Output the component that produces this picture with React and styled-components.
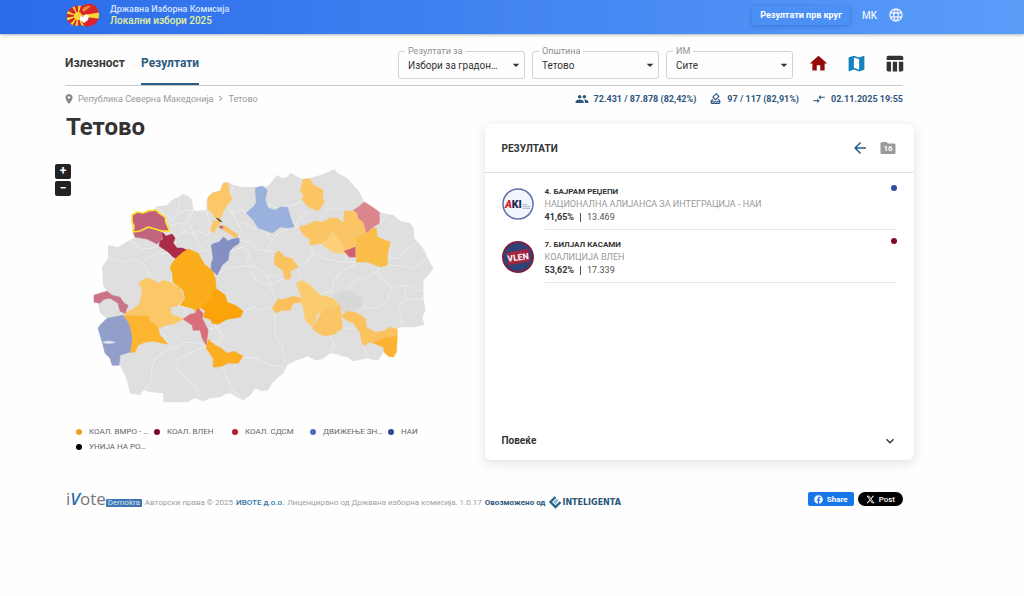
import React, { useState } from "react";
import styled, { createGlobalStyle } from "styled-components";
import {
  MdArrowBack,
  MdChevronRight,
  MdCompareArrows,
  MdExpandMore,
  MdFolder,
  MdGroup,
  MdHome,
  MdLanguage,
  MdLocationOn,
  MdMap,
  MdOutlineHowToVote,
  MdTableChart,
  MdArrowDropDown,
} from "react-icons/md";
import { FaFacebook } from "react-icons/fa";
import { FaXTwitter } from "react-icons/fa6";

const filters = [
  { id: "race", label: "Резултати за", options: ["Избори за градоначалник", "Избори за совет"] },
  { id: "municipality", label: "Општина", options: ["Тетово"] },
  { id: "station", label: "ИМ", options: ["Сите"] },
];

const legend = [
  { name: "КОАЛ. ВМРО - ДПМНЕ", color: "#eaa31c" },
  { name: "КОАЛ. ВЛЕН", color: "#7d0a24" },
  { name: "КОАЛ. СДСМ", color: "#b3202c" },
  { name: "ДВИЖЕЊЕ ЗНАМ", color: "#4a6fc0" },
  { name: "НАИ", color: "#2f4796" },
  { name: "УНИЈА НА РОМИ", color: "#000" },
];

const candidates = [
  {
    name: "4. БАЈРАМ РЕЏЕПИ",
    party: "НАЦИОНАЛНА АЛИЈАНСА ЗА ИНТЕГРАЦИЈА - НАИ",
    percent: "41,65%",
    votes: "13.469",
    color: "#2f4f9c",
    logo: "aki",
  },
  {
    name: "7. БИЛЈАЛ КАСАМИ",
    party: "КОАЛИЦИЈА ВЛЕН",
    percent: "53,62%",
    votes: "17.339",
    color: "#800a22",
    logo: "vlen",
  },
];

const country =
  "M132 230L132 215L137 212L143 213L148 210L155 209L157 206L162 206L167 205L172 200L178 197L183 194L188 196L192 200L193 210L198 211L206 210L207 200L212 193L222 190L223 183L227 182L233 185L243 187L255 187L262 186L267 187L272 181L277 175L282 178L287 177L290 173L296 176L302 179L310 178L320 175L330 171L334 169L337 173L347 178L352 184L358 190L364 202L372 207L379 212L386 214L393 215L400 221L410 223L413 228L414 238L418 243L422 247L425 253L427 258L433 268L428 275L423 280L423 298L425 310L422 317L424 325L413 327L402 327L397 328L396 352L393 357L388 355L383 352L378 360L373 360L367 358L353 361L347 357L342 356L337 354L330 353L322 359L315 360L307 356L300 359L294 361L287 365L283 373L277 378L272 383L268 390L261 391L255 388L250 395L243 400L237 397L230 393L225 394L220 397L210 398L203 401L195 398L187 402L163 402L163 393L152 392L143 390L140 395L130 393L127 380L120 365L112 365L110 358L105 353L103 345L98 328L100 325L107 318L100 313L98 303L94 302L94 295L107 291L103 285L102 267L108 258L108 245L118 247L130 240L135 237Z";

// Lines between municipalities without a colour of their own
const borders = [
  "M157 207L163 213L172 219L178 213L186 210L193 210",
  "M170 226L178 223L186 224L189 211",
  "M178 197L180 204L177 211",
  "M206 210L208 218L212 226L207 235L198 231L192 234L184 230L180 226",
  "M173 240L182 232L187 232",
  "M193 210L189 221L193 233L198 243L203 251L211 250",
  "M130 240L141 249L153 248L158 245",
  "M108 258L122 262L136 259L144 265L150 275L151 279",
  "M144 259L156 254L168 253L175 259",
  "M170 282L173 275L172 266",
  "M233 186L227 205L232 214L240 209L246 213",
  "M232 208L236 221L241 230L238 240",
  "M240 222L248 225L255 229",
  "M265 203L277 208L290 206L300 202",
  "M294 226L300 218L308 211",
  "M324 210L338 208L345 211",
  "M266 232L271 241L268 251L256 249L249 242L239 240",
  "M271 241L277 234L288 227L299 227",
  "M217 274L229 268L240 266L254 266L267 275L277 276",
  "M230 251L243 247L250 253L246 263",
  "M268 251L277 253M297 266L305 263L313 252L311 246",
  "M312 254L326 259L341 262L355 262",
  "M282 279L270 286L275 298M267 275L270 286L256 280L249 271",
  "M298 269L300 277L302 281M320 294L331 291L334 280L340 273L355 264",
  "M334 295L348 288L355 280L367 277L377 272L379 266",
  "M377 270L382 280L391 287L405 285L423 292",
  "M391 287L387 301L375 308L364 307L356 298",
  "M405 299L398 306L402 327M405 285L405 299L423 299",
  "M387 265L401 266L413 268L427 258",
  "M390 258L398 258L407 248L418 242",
  "M379 223L386 215M390 242L389 258",
  "M243 311L254 307L261 310L270 307L277 313",
  "M275 313L275 335L281 344L285 362",
  "M208 330L219 326M214 324L222 335L218 342L210 341",
  "M158 329L165 336L168 345L173 350L184 342L199 343L207 345",
  "M130 353L120 355M173 346L155 358L151 371L152 381L143 390",
  "M207 345L178 359L177 368L190 382L197 386L199 398",
  "M238 358L253 357L269 365L284 367",
  "M222 366L226 375L231 388L241 398",
  "M330 335L334 345L330 353M342 328L360 328M363 344L366 358",
  "M170 307L176 305L187 308L184 313M107 318L118 316M125 313L118 303",
];

const regions = [
  { fill: "#d8d8d8", d: "M333 295L347 289L362 298L362 307L343 312L338 304Z" },
  { fill: "#c0667d", d: "M133 232L140 231L148 228L155 229L161 232L163 237L160 241L157 244L147 239L135 237Z" },
  { fill: "#a92b47", d: "M162 232L166 236L172 234L175 238L173 243L177 248L182 248L187 250L182 254L177 259L173 257L168 252L159 246L160 241L163 239Z" },
  { fill: "#faac1a", d: "M172 263L177 257L183 252L188 249L198 253L204 264L212 270L215 278L216 288L213 298L206 304L200 307L197 312L192 308L180 305L185 298L183 290L173 282L172 272L170 268Z" },
  { fill: "#fba30a", d: "M217 289L225 295L227 302L235 305L243 311L240 317L227 319L218 324L212 323L210 319L203 317L205 311L200 307L213 298L213 291Z" },
  { fill: "#fbc767", d: "M123 313L133 309L140 303L142 288L138 283L144 279L150 278L158 283L162 280L170 282L180 288L184 298L177 306L170 307L172 315L180 317L183 319L173 324L165 325L158 329L154 323L150 322L148 316L125 314Z" },
  { fill: "#fcb431", d: "M124 315L148 316L150 322L154 323L158 328L160 335L168 344L153 341L145 342L138 345L135 352L130 352L132 338L130 328L128 322Z" },
  { fill: "#939fcb", d: "M107 318L123 315L128 322L130 328L132 338L130 352L120 355L119 365L112 365L110 358L105 353L103 345L98 328L100 325Z" },
  { fill: "#c97488", d: "M94 302L94 295L100 293L107 291L112 295L120 297L124 303L128 305L125 313L120 311L118 303L110 298L104 299L100 303Z" },
  { fill: "#d96f7a", d: "M183 319L190 314L195 313L198 308L203 313L202 318L208 330L206 345L202 338L200 330L193 330L192 325Z" },
  { fill: "#fbae22", d: "M208 339L215 345L221 348L227 353L234 351L243 356L238 363L227 363L222 366L213 367L213 358L206 348Z" },
  { fill: "#fbc767", d: "M207 200L208 197L212 193L220 191L223 183L228 183L229 192L232 199L227 205L223 212L220 219L215 218L212 213L208 210Z" },
  { fill: "#fbc767", d: "M213 221L221 220L219 225L216 228L214 233L210 231Z" },
  { fill: "#fbc160", d: "M221 226L225 226L238 235L236 238L222 229Z" },
  { fill: "#5a4640", d: "M216 218L219 219L222 222L219 221Z" },
  { fill: "#c96070", d: "M219 226L223 226L222 229L220 228Z" },
  { fill: "#848fc4", d: "M211 245L215 243L219 242L223 237L226 239L227 241L232 239L239 238L239 243L232 248L229 252L228 260L222 265L217 275L211 269L211 264L213 258Z" },
  { fill: "#9bb1dd", d: "M255 188L262 186L267 190L265 200L268 208L275 210L280 207L287 207L289 213L291 220L294 227L287 228L280 227L272 233L264 230L258 228L253 220L246 213L253 207L256 203Z" },
  { fill: "#fbc564", d: "M303 179L310 179L313 185L323 190L322 196L324 202L318 211L308 207L302 200L303 195L300 191Z" },
  { fill: "#fbc564", d: "M299 227L306 225L315 221L322 222L330 218L337 218L342 222L333 232L323 243L310 245L309 239L303 235Z" },
  { fill: "#fccf78", d: "M322 245L333 233L340 240L345 250L345 254L333 252Z" },
  { fill: "#fbc465", d: "M344 211L355 211L359 218L363 222L367 233L356 235L356 247L345 250L340 240L333 233L338 226L343 222Z" },
  { fill: "#dd858c", d: "M353 210L358 207L364 202L372 207L379 212L379 223L370 229L368 233L366 232L363 222L358 218L357 213Z" },
  { fill: "#fbbd49", d: "M356 236L367 233L372 228L376 228L377 237L390 242L387 255L387 265L380 267L367 262L356 262Z" },
  { fill: "#d5606d", d: "M344 251L350 249L355 247L355 257L349 257Z" },
  { fill: "#fbc260", d: "M275 253L279 251L285 257L291 258L298 267L290 271L291 277L289 279L285 279L282 270L274 264Z" },
  { fill: "#fbcb70", d: "M296 283L302 280L310 285L320 295L333 298L340 306L331 308L322 310L317 314L315 320L312 327L305 320L302 303L296 302L301 297Z" },
  { fill: "#fbc465", d: "M322 310L331 308L340 306L342 328L334 334L325 336L318 333L312 328L317 320Z" },
  { fill: "#fbc05b", d: "M272 308L275 303L278 299L284 299L293 296L300 298L300 302L293 303L290 310L282 310L276 313Z" },
  { fill: "#fbc260", d: "M341 315L347 311L355 312L365 318L366 327L375 332L383 331L389 327L397 329L397 336L382 338L373 343L368 342L364 346L361 341L360 333L353 323L346 320Z" },
  { fill: "#fcb333", d: "M373 343L382 338L397 336L396 352L393 357L388 356L384 352L383 347Z" },
];

const selectedRegion =
  "M133 232L134 226L132 222L132 215L137 212L143 213L148 211L156 210L159 213L165 217L166 223L168 227L169 231L162 231L155 229L148 227L140 231Z";

const ResultsMap = () => (
  <MapDrawing viewBox="71 164 413 246" role="img" aria-label="Мапа на општини">
    <path d={country} fill="#dfdfdf" />
    <path d={borders.join("")} fill="none" stroke="#ebebeb" strokeWidth="1" strokeLinejoin="round" />
    {regions.map((region) => (
      <path key={region.d} d={region.d} fill={region.fill} stroke={region.fill} strokeWidth="0.5" strokeLinejoin="round" />
    ))}
    <path d="M102 342Q108 339 116 342Q108 345 102 342Z" fill="#dbe3f2" />
    <path d={selectedRegion} fill="#c0607b" stroke="#fbe22d" strokeWidth="1.6" strokeLinejoin="round" />
  </MapDrawing>
);

const StateLogo = () => (
  <svg width="34" height="26" viewBox="0 0 34 26" aria-hidden="true">
    <defs>
      <clipPath id="emblem">
        <path d="M1 11C4 4 12 3 17 4C21 0 30 1 32 8C35 15 31 23 24 24C20 26 17 23 15 23C9 25 3 23 1 17Z" />
      </clipPath>
    </defs>
    <g clipPath="url(#emblem)">
      <rect width="34" height="26" fill="#d9242b" />
      <path
        d="M12 14L-2 7V11ZM12 14L-2 16V20ZM12 14L0 26H5ZM12 14L8 28H12ZM12 14L3 0H7ZM12 14L12 0H16ZM12 14L36 10V17ZM12 14L17 28H21Z"
        fill="#f8d633"
      />
      <path d="M16 8Q19 3 25 4Q22 7 18 10Z" fill="#e8893a" />
      <circle cx="12" cy="14" r="4" fill="#f8d633" />
      <path d="M14 14L17 15L20 12L23 14L22 18L18 21L14 18Z" fill="#fff" />
    </g>
  </svg>
);

const AkiLogo = () => (
  <svg width="32" height="32" viewBox="0 0 33 33" aria-hidden="true">
    <circle cx="16.5" cy="16.5" r="15.5" fill="#f3f5fa" stroke="#5b6fa9" strokeWidth="1.5" />
    <text x="3" y="21" fontFamily="Roboto, sans-serif" fontWeight="900" fontSize="11" fontStyle="italic" fill="#d2232f">
      A
    </text>
    <text x="10" y="21" fontFamily="Roboto, sans-serif" fontWeight="900" fontSize="11" fill="#222a55">
      KI
    </text>
    <path d="M21 17H26M21 19H29M21 21H29" stroke="#aeb6cc" strokeWidth="1" />
  </svg>
);

const VlenLogo = () => (
  <svg width="32" height="32" viewBox="0 0 33 33" aria-hidden="true">
    <circle cx="16.5" cy="16.5" r="15.5" fill="#2c4478" stroke="#7f1f3f" strokeWidth="2" />
    <path d="M5 12L27 8L29 21L7 25Z" fill="#a5263f" />
    <text
      x="16.5"
      y="20"
      textAnchor="middle"
      transform="rotate(-7 16.5 16.5)"
      fontFamily="Roboto, sans-serif"
      fontWeight="700"
      fontSize="9"
      fill="#fff"
    >
      VLEN
    </text>
  </svg>
);

const Filter = ({ id, label, options }) => (
  <Field>
    <FieldLabel htmlFor={id}>{label}</FieldLabel>
    <Select id={id}>
      {options.map((option) => (
        <option key={option}>{option}</option>
      ))}
    </Select>
    <Caret />
  </Field>
);

const Candidate = ({ candidate }) => (
  <CandidateRow>
    {candidate.logo === "aki" ? <AkiLogo /> : <VlenLogo />}
    <CandidateDetails>
      <div>
        <CandidateName>{candidate.name}</CandidateName>
        <Party>{candidate.party}</Party>
        <Votes>
          <strong>{candidate.percent}</strong>
          <Separator />
          {candidate.votes}
        </Votes>
      </div>
      <Dot color={candidate.color} />
    </CandidateDetails>
  </CandidateRow>
);

export default function App() {
  const [tab, setTab] = useState("results");

  return (
    <>
      <GlobalStyle />
      <Header>
        <Brand href="#">
          <StateLogo />
          <span>
            <BrandName>Државна Изборна Комисија</BrandName>
            <BrandEvent>Локални избори 2025</BrandEvent>
          </span>
        </Brand>
        <HeaderActions>
          <RoundButton type="button">Резултати прв круг</RoundButton>
          <Language type="button">
            MK
            <MdLanguage size={16} />
          </Language>
        </HeaderActions>
      </Header>

      <Toolbar>
        <Tabs>
          <Tab type="button" $active={tab === "turnout"} onClick={() => setTab("turnout")}>
            Излезност
          </Tab>
          <Tab type="button" $active={tab === "results"} onClick={() => setTab("results")}>
            Резултати
          </Tab>
        </Tabs>
        <Filters>
          {filters.map((filter) => (
            <Filter key={filter.id} {...filter} />
          ))}
        </Filters>
        <Views>
          <IconButton type="button" aria-label="Почетна" $color="#930a0a">
            <MdHome size={21} />
          </IconButton>
          <IconButton type="button" aria-label="Мапа" $color="#1682bd">
            <MdMap size={21} />
          </IconButton>
          <IconButton type="button" aria-label="Табела" $color="#333">
            <MdTableChart size={21} />
          </IconButton>
        </Views>
      </Toolbar>

      <InfoBar>
        <Breadcrumbs>
          <MdLocationOn size={12} color="#888" />
          <Crumb href="#">Република Северна Македонија</Crumb>
          <MdChevronRight size={11} />
          <span>Тетово</span>
        </Breadcrumbs>
        <Stats>
          <Stat>
            <MdGroup size={14} />
            72.431 / 87.878 (82,42%)
          </Stat>
          <Stat>
            <MdOutlineHowToVote size={13} />
            97 / 117 (82,91%)
          </Stat>
          <Stat>
            <MdCompareArrows size={14} />
            02.11.2025 19:55
          </Stat>
        </Stats>
      </InfoBar>

      <Content>
        <section>
          <Title>Тетово</Title>
          <MapRow>
            <ZoomControls>
              <ZoomButton type="button" aria-label="Зголеми">+</ZoomButton>
              <ZoomButton type="button" aria-label="Намали">−</ZoomButton>
            </ZoomControls>
            <ResultsMap />
          </MapRow>
          <Legend>
            {legend.map((item) => (
              <LegendItem key={item.name}>
                <Dot color={item.color} />
                <LegendName>{item.name}</LegendName>
              </LegendItem>
            ))}
          </Legend>
        </section>

        <Card>
          <CardHeader>
            <CardTitle>РЕЗУЛТАТИ</CardTitle>
            <CardActions>
              <IconButton type="button" aria-label="Назад" $color="#245f92">
                <MdArrowBack size={18} />
              </IconButton>
              <FolderButton type="button">
                <MdFolder size={18} />
                <FolderCount>16</FolderCount>
              </FolderButton>
            </CardActions>
          </CardHeader>
          <CandidateList>
            {candidates.map((candidate) => (
              <Candidate key={candidate.name} candidate={candidate} />
            ))}
          </CandidateList>
          <More type="button">
            Повеќе
            <MdExpandMore size={16} />
          </More>
        </Card>
      </Content>

      <Footer>
        <Credits>
          <IvoteLogo href="#">
            <IvoteName>
              i<em>V</em>ote
            </IvoteName>
            <IvoteTag>Demokra</IvoteTag>
          </IvoteLogo>
          <span>Авторски права © 2025</span>
          <FooterLink href="#">ИВОТЕ д.о.о.</FooterLink>
          <span>Лиценцирано од Државна изборна комисија. 1.0.17</span>
          <PoweredBy>Овозможено од</PoweredBy>
          <Inteligenta href="#">
            <svg width="14" height="14" viewBox="0 0 13 14" aria-hidden="true">
              <path d="M7 2L2 7L7 12L12 7" fill="none" stroke="#2b6487" strokeWidth="2.4" />
              <path d="M5 7L8 4L10 5L7 9Z" fill="#7fb4d2" />
            </svg>
            INTELIGENTA
          </Inteligenta>
        </Credits>
        <Share>
          <FacebookButton type="button">
            <FaFacebook size={9} />
            Share
          </FacebookButton>
          <PostButton type="button">
            <FaXTwitter size={9} />
            Post
          </PostButton>
        </Share>
      </Footer>
    </>
  );
}

const GlobalStyle = createGlobalStyle`
  * {
    box-sizing: border-box;
  }

  body {
    margin: 0;
    background: #fefefe;
    color: #333;
    font-family: Roboto, "Liberation Sans", sans-serif;
    font-size: 9px;
  }

  button,
  select {
    margin: 0;
    padding: 0;
    border: 0;
    background: none;
    color: inherit;
    font: inherit;
  }

  button {
    cursor: pointer;
  }

  a {
    color: inherit;
    text-decoration: none;
  }

  svg {
    flex-shrink: 0;
  }
`;

const Header = styled.header`
  display: flex;
  align-items: center;
  justify-content: space-between;
  height: 34px;
  padding: 0 120px 4px 66px;
  background: linear-gradient(90deg, #2b6bea, #5a9df9);
  box-shadow: 0 1px 3px rgba(0, 0, 0, 0.3);
  color: #fff;
`;

const Brand = styled.a`
  display: flex;
  align-items: center;
  gap: 10px;
`;

const BrandName = styled.span`
  display: block;
  color: #d5e3fc;
  font-size: 9px;
  font-weight: 500;
  line-height: 11px;
`;

const BrandEvent = styled.span`
  display: block;
  color: #e3f29b;
  font-size: 10px;
  font-weight: 500;
  line-height: 11px;
`;

const HeaderActions = styled.div`
  display: flex;
  align-items: center;
  gap: 12px;
`;

const RoundButton = styled.button`
  height: 19px;
  padding: 0 8px;
  border-radius: 3px;
  background: #4d90f5;
  box-shadow: 0 1px 4px rgba(20, 60, 140, 0.35);
  font-size: 9px;
  font-weight: 700;
`;

const Language = styled.button`
  display: flex;
  align-items: center;
  gap: 11px;
  color: #e6effd;
  font-size: 10px;
  font-weight: 500;
`;

const Toolbar = styled.nav`
  display: flex;
  align-items: stretch;
  height: 52px;
  margin: 0 121px 0 65px;
  border-bottom: 1px solid #c9c9c9;
`;

const Tabs = styled.div`
  display: flex;
  flex: 1;
  gap: 16px;
`;

const Tab = styled.button`
  padding-top: 8px;
  border-bottom: 2px solid ${(props) => (props.$active ? "#2d5b7f" : "transparent")};
  color: ${(props) => (props.$active ? "#2d5b7f" : "#3a3a3a")};
  font-size: 12px;
  font-weight: 700;
`;

const Filters = styled.div`
  display: flex;
  align-items: center;
  gap: 7px;
  padding-top: 10px;
`;

const Field = styled.div`
  position: relative;
  display: flex;
  align-items: center;
  width: 127px;
  height: 28px;
  border: 1px solid #d2d2d2;
  border-radius: 3px;
`;

const FieldLabel = styled.label`
  position: absolute;
  top: -6px;
  left: 6px;
  padding: 0 3px;
  background: #fefefe;
  color: #909090;
  font-size: 9px;
  line-height: 11px;
`;

const Select = styled.select`
  width: 100%;
  height: 100%;
  padding: 2px 21px 0 9px;
  appearance: none;
  overflow: hidden;
  font-size: 10px;
  text-overflow: ellipsis;
  white-space: nowrap;
`;

const Caret = styled(MdArrowDropDown)`
  position: absolute;
  right: 0;
  width: 16px;
  height: 16px;
  pointer-events: none;
`;

const Views = styled.div`
  display: flex;
  align-items: center;
  gap: 17px;
  padding: 8px 0 0 15px;
  margin-right: -2px;
`;

const IconButton = styled.button`
  display: flex;
  color: ${(props) => props.$color};
`;

const InfoBar = styled.div`
  display: flex;
  align-items: center;
  justify-content: space-between;
  height: 25px;
  margin: 0 121px 0 63px;
`;

const Breadcrumbs = styled.div`
  display: flex;
  align-items: center;
  gap: 2px;
  color: #9a9a9a;
  font-size: 9px;
`;

const Crumb = styled.a`
  margin-left: 1px;
`;

const Stats = styled.div`
  display: flex;
  gap: 13px;
  color: #2f567c;
  font-weight: 700;
`;

const Stat = styled.span`
  display: flex;
  align-items: center;
  gap: 5px;
`;

const Content = styled.main`
  display: grid;
  grid-template-columns: 1fr 1fr;
  align-items: start;
  padding: 0 110px 0 55px;
`;

const Title = styled.h1`
  margin: 2px 0 0 11px;
  color: #333;
  font-size: 24px;
  font-weight: 700;
  line-height: 28px;
`;

const MapRow = styled.div`
  display: flex;
  margin-top: 23px;
`;

const ZoomControls = styled.div`
  display: flex;
  flex-direction: column;
  gap: 2px;
  width: 16px;
`;

const ZoomButton = styled.button`
  height: 15px;
  border-radius: 2px;
  background: #222;
  color: #fff;
  font-size: 12px;
  font-weight: 700;
  line-height: 15px;
`;

const MapDrawing = styled.svg`
  flex: 1;
  min-width: 0;
`;

const Legend = styled.ul`
  display: grid;
  grid-template-columns: repeat(auto-fill, 78px);
  margin: 14px 0 0 21px;
  padding: 0;
  list-style: none;
`;

const LegendItem = styled.li`
  display: flex;
  align-items: center;
  gap: 7px;
  height: 15px;
  color: #666;
  font-size: 8px;
`;

const LegendName = styled.span`
  max-width: 62px;
  overflow: hidden;
  text-overflow: ellipsis;
  white-space: nowrap;
`;

const Dot = styled.i`
  flex-shrink: 0;
  width: 6px;
  height: 6px;
  border-radius: 50%;
  background: ${(props) => props.color};
`;

const Card = styled.section`
  display: flex;
  flex-direction: column;
  min-height: 336px;
  margin-top: 13px;
  border-radius: 6px;
  background: #fff;
  box-shadow: 0 3px 12px rgba(0, 0, 0, 0.12);
`;

const CardHeader = styled.header`
  display: flex;
  align-items: center;
  justify-content: space-between;
  height: 49px;
  padding: 0 17px;
  border-bottom: 1px solid #e2e2e2;
`;

const CardTitle = styled.h2`
  margin: 0;
  font-size: 10px;
  font-weight: 700;
`;

const CardActions = styled.div`
  display: flex;
  align-items: center;
  gap: 10px;
`;

const FolderButton = styled.button`
  position: relative;
  display: flex;
  color: #999;
`;

const FolderCount = styled.span`
  position: absolute;
  inset: 1px 0 0;
  color: #fff;
  font-size: 8px;
  font-weight: 700;
  line-height: 18px;
`;

const CandidateList = styled.div`
  flex: 1;
  padding: 4px 17px 0;
`;

const CandidateRow = styled.article`
  display: flex;
  align-items: center;
  gap: 11px;
`;

const CandidateDetails = styled.div`
  display: flex;
  flex: 1;
  justify-content: space-between;
  padding: 8px 0 5px;
  border-bottom: 1px solid #e6e6e6;
`;

const CandidateName = styled.h3`
  margin: 0;
  font-size: 8px;
  font-weight: 700;
  line-height: 13px;
`;

const Party = styled.div`
  color: #999;
  line-height: 13px;
`;

const Votes = styled.div`
  display: flex;
  align-items: center;
  color: #555;
  line-height: 13px;

  strong {
    color: #333;
  }
`;

const Separator = styled.span`
  width: 1px;
  height: 9px;
  margin: 0 6px;
  background: #555;
`;

const More = styled.button`
  display: flex;
  align-items: center;
  justify-content: space-between;
  height: 39px;
  padding: 0 16px 0 17px;
  font-size: 10px;
  font-weight: 700;
`;

const Footer = styled.footer`
  display: flex;
  align-items: center;
  justify-content: space-between;
  margin: 29px 121px 0 66px;
`;

const Credits = styled.div`
  display: flex;
  align-items: baseline;
  gap: 3px;
  color: #a0a0a0;
  font-size: 8px;
  white-space: nowrap;
`;

const IvoteLogo = styled.a`
  display: flex;
  align-items: baseline;
`;

const IvoteName = styled.span`
  color: #777;
  font-family: "Open Sans", sans-serif;
  font-size: 17px;
  line-height: 20px;

  em {
    color: #2d6cae;
    font-weight: 600;
  }
`;

const IvoteTag = styled.span`
  padding: 0 2px;
  border-radius: 1px;
  background: #3e75b3;
  color: #d5e4f4;
  font-size: 8px;
  line-height: 8px;
`;

const FooterLink = styled.a`
  color: #2c76a8;
  font-weight: 500;
`;

const PoweredBy = styled.span`
  color: #2f567c;
  font-weight: 700;
`;

const Inteligenta = styled.a`
  display: flex;
  align-items: center;
  align-self: flex-end;
  color: #2b5674;
  font-family: "DejaVu Sans", sans-serif;
  font-size: 8px;
  font-weight: 700;
`;

const Share = styled.div`
  display: flex;
  gap: 4px;
`;

const FacebookButton = styled.button`
  display: flex;
  align-items: center;
  gap: 4px;
  height: 14px;
  padding: 0 6px;
  border-radius: 2px;
  background: #1877e8;
  color: #fff;
  font-size: 8px;
  font-weight: 700;
`;

const PostButton = styled(FacebookButton)`
  padding: 0 8px;
  border-radius: 7px;
  background: #000;
  font-weight: 500;
`;
